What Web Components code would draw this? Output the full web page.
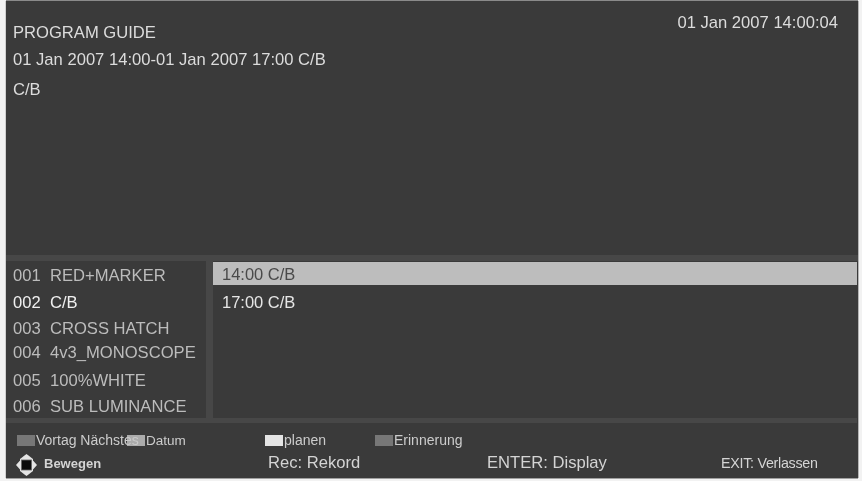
<!DOCTYPE html>
<html>
<head>
<meta charset="utf-8">
<style>
  html, body { margin: 0; height: 100%; background: #f2f2f2; }
  body { padding: 1px 4px 3px 6px; box-sizing: border-box; font-family: "Liberation Sans", Arial, sans-serif; color: #dcdcdc; overflow: hidden; }
</style>
</head>
<body>
<guide-screen>
  <guide-info slot="info" clock="01 Jan 2007 14:00:04" title="PROGRAM GUIDE" range="01 Jan 2007 14:00-01 Jan 2007 17:00 C/B" desc="C/B"></guide-info>
  <channel-list slot="channels">
    <channel-row num="001" name="RED+MARKER" dim style="margin-top:4px"></channel-row>
    <channel-row num="002" name="C/B" style="margin-top:5px"></channel-row>
    <channel-row num="003" name="CROSS HATCH" dim style="margin-top:4px"></channel-row>
    <channel-row num="004" name="4v3_MONOSCOPE" dim style="margin-top:2px"></channel-row>
    <channel-row num="005" name="100%WHITE" dim style="margin-top:6px"></channel-row>
    <channel-row num="006" name="SUB LUMINANCE" dim style="margin-top:4px"></channel-row>
  </channel-list>
  <event-list slot="events">
    <event-row selected>14:00 C/B</event-row>
    <event-row>17:00 C/B</event-row>
  </event-list>
  <guide-footer slot="footer"></guide-footer>
</guide-screen>

<script>
class GuideScreen extends HTMLElement {
  constructor() {
    super();
    this.attachShadow({ mode: "open" }).innerHTML = `
      <style>
        :host { display: flex; flex-direction: column; height: 477px; background: #3a3a3a; box-shadow: 0 -1px 0 #8a8a8a, -1px 0 0 #cfcfcf, 1px 0 0 #b5b5b5, 0 1px 0 #a0a0a0; }
        .mid { display: flex; height: 157px; gap: 7px; background: #474747; }
        .band { background: #474747; }
        .band.top { height: 6px; }
        .band.bottom { height: 5px; margin-right: 1px; }
        .soft { display: flex; flex-direction: column; height: 100%; filter: blur(.45px); }
      </style>
      <div class="soft">
        <slot name="info"></slot>
        <div class="band top"></div>
        <div class="mid">
          <slot name="channels"></slot>
          <slot name="events"></slot>
        </div>
        <div class="band bottom"></div>
        <slot name="footer"></slot>
      </div>
    `;
  }
}

class GuideInfo extends HTMLElement {
  constructor() {
    super();
    this.attachShadow({ mode: "open" }).innerHTML = `
      <style>
        :host { display: flex; flex-direction: column; height: 254px; padding-left: 7px; font-size: 16.6px; line-height: 18px; position: relative; box-sizing: border-box; flex: none; }
        .clock { position: absolute; top: 13px; right: 20px; }
        .title { margin-top: 23px; }
        .range { margin-top: 9px; }
        .desc { margin-top: 12px; }
      </style>
      <div class="clock">${this.getAttribute("clock")}</div>
      <div class="title">${this.getAttribute("title")}</div>
      <div class="range">${this.getAttribute("range")}</div>
      <div class="desc">${this.getAttribute("desc")}</div>
    `;
  }
}

class ChannelList extends HTMLElement {
  constructor() {
    super();
    this.attachShadow({ mode: "open" }).innerHTML = `
      <style>
        :host { display: flex; flex-direction: column; width: 200px; background: #3a3a3a; flex: none; }
      </style>
      <slot></slot>
    `;
  }
}

class ChannelRow extends HTMLElement {
  constructor() {
    super();
    this.attachShadow({ mode: "open" }).innerHTML = `
      <style>
        :host { display: flex; align-items: center; flex: none; height: 22px; padding-left: 7px; font-size: 16.6px; color: #f0f0f0; white-space: nowrap; }
        :host([dim]) { color: #bcbcbc; }
        .num { width: 37px; }
      </style>
      <span class="num">${this.getAttribute("num")}</span>
      <span>${this.getAttribute("name")}</span>
    `;
  }
}

class EventList extends HTMLElement {
  constructor() {
    super();
    this.attachShadow({ mode: "open" }).innerHTML = `
      <style>
        :host { display: flex; flex-direction: column; flex: 1; background: #3a3a3a; padding: 1px 1px 0 0; gap: 5px; }
      </style>
      <slot></slot>
    `;
  }
}

class EventRow extends HTMLElement {
  constructor() {
    super();
    this.attachShadow({ mode: "open" }).innerHTML = `
      <style>
        :host { display: flex; align-items: center; box-sizing: border-box; height: 23px; padding: 2px 0 0 9px; font-size: 16.5px; color: #e6e6e6; }
        :host([selected]) { background: #bdbdbd; color: #4a4a4a; }
      </style>
      <slot></slot>
    `;
  }
}

class ColorKey extends HTMLElement {
  constructor() {
    super();
    this.attachShadow({ mode: "open" }).innerHTML = `
      <style>
        :host { display: flex; align-items: center; flex: none; font-size: 14px; color: #cccccc; white-space: nowrap; position: relative; }
        i { width: 18px; height: 11px; margin-right: 1px; background: var(--key, #777); flex: none; }
      </style>
      <i></i><slot></slot>
    `;
  }
}

class GuideFooter extends HTMLElement {
  constructor() {
    super();
    this.attachShadow({ mode: "open" }).innerHTML = `
      <style>
        :host { display: grid; grid-template-columns: 253px 219px 234px 1fr; grid-template-rows: 29px 26px; padding-left: 9px; flex: 1; color: #d4d4d4; }
        .keys { grid-column: 1 / -1; display: flex; align-items: center; padding: 5px 0 0 2px; }
        .cell { display: flex; align-items: center; font-size: 16.6px; padding-bottom: 4px; white-space: nowrap; }
        .cell.move { font-size: 13px; font-weight: bold; gap: 6px; padding-bottom: 3px; }
        .cell.exit { font-size: 14.3px; letter-spacing: -.02em; }
        svg { margin-top: 2px; filter: blur(.6px); }
      </style>
      <div class="keys">
        <color-key style="--key:#777;width:110px">Vortag Nächstes</color-key>
        <color-key style="--key:rgba(200,200,200,.8);width:138px;font-size:13.5px">Datum</color-key>
        <color-key style="--key:#e4e4e4;width:110px">planen</color-key>
        <color-key style="--key:#777">Erinnerung</color-key>
      </div>
      <div class="cell move">
        <svg width="23" height="24" viewBox="0 0 23 24">
          <path d="M11.5 1 Q13 2 18 6 V18 Q13 22 11.5 23 Q10 22 5 18 V6 Q10 2 11.5 1 Z M1 12 L5 7.5 V16.5 Z M22 12 L18 7.5 V16.5 Z" fill="#e4e4e4"/>
          <rect x="6.5" y="7" width="10" height="10" fill="#0c0c0c" stroke="#666" stroke-width=".8"/>
        </svg>
        <span>Bewegen</span>
      </div>
      <div class="cell">Rec: Rekord</div>
      <div class="cell">ENTER: Display</div>
      <div class="cell exit">EXIT: Verlassen</div>
    `;
  }
}

customElements.define("guide-screen", GuideScreen);
customElements.define("guide-info", GuideInfo);
customElements.define("channel-list", ChannelList);
customElements.define("channel-row", ChannelRow);
customElements.define("event-list", EventList);
customElements.define("event-row", EventRow);
customElements.define("color-key", ColorKey);
customElements.define("guide-footer", GuideFooter);
</script>
</body>
</html>
